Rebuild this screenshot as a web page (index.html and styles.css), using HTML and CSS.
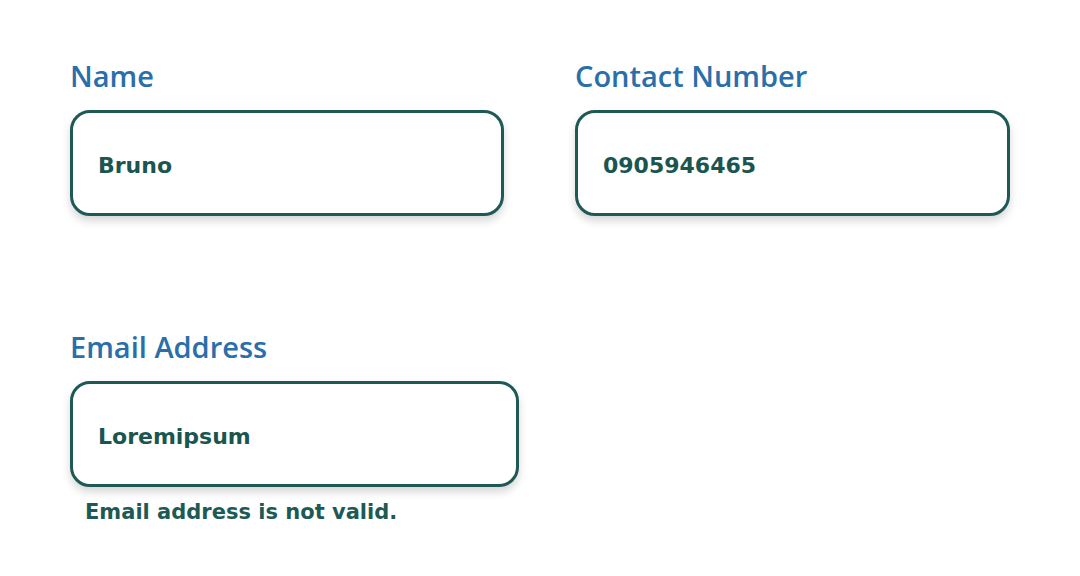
FILE: index.html
```html
<!DOCTYPE html>
<html lang="en">
<head>
<meta charset="utf-8">
<title>Form</title>
<link rel="stylesheet" href="styles.css">
</head>
<body>
<main class="form">
  <div class="row">
    <div class="field field-name">
      <label class="label">Name</label>
      <div class="input"><span class="value">Bruno</span></div>
    </div>
    <div class="field field-contact">
      <label class="label">Contact Number</label>
      <div class="input"><span class="value">0905946465</span></div>
    </div>
  </div>
  <div class="row row-second">
    <div class="field field-email">
      <label class="label">Email Address</label>
      <div class="input"><span class="value">Loremipsum</span></div>
      <p class="error">Email address is not valid.</p>
    </div>
  </div>
</main>
</body>
</html>
```
FILE: styles.css
```css
html, body {
  margin: 0;
  padding: 0;
  background: #ffffff;
}
.form {
  padding: 56px 0 0 70px;
  display: flex;
  flex-direction: column;
}
.row {
  display: flex;
  gap: 71px;
}
.row-second {
  margin-top: 111px;
}
.field {
  display: flex;
  flex-direction: column;
}
.field-name { width: 434px; }
.field-contact { width: 435px; }
.field-email { width: 449px; }
.label {
  font-family: "Open Sans", sans-serif;
  font-weight: 600;
  font-size: 29px;
  line-height: 40px;
  color: #2a6fa9;
  margin-bottom: 14px;
}
.input {
  box-sizing: border-box;
  height: 106px;
  border: 3px solid #1f5955;
  border-radius: 20px;
  background: #fff;
  box-shadow: 0 5px 9px rgba(0, 0, 0, 0.16);
  display: flex;
  align-items: center;
  padding: 4px 0 0 25px;
}
.value {
  font-family: "DejaVu Sans", sans-serif;
  font-weight: 700;
  font-size: 22px;
  color: #1a5550;
}
.error {
  margin: 12px 0 0 15px;
  font-family: "DejaVu Sans", sans-serif;
  font-weight: 700;
  font-size: 21px;
  line-height: 26px;
  color: #1d5a55;
}
```
